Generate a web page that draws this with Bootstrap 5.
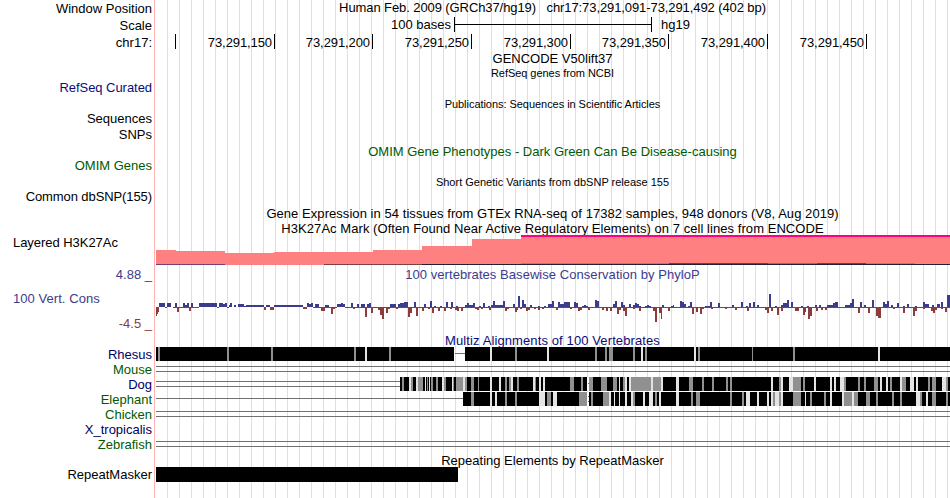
<!DOCTYPE html>
<html lang="en">
<head>
<meta charset="utf-8">
<title>Genome tracks chr17:73,291,091-73,291,492</title>
<link href="https://cdn.jsdelivr.net/npm/bootstrap@5.3.0/dist/css/bootstrap.min.css" rel="stylesheet">
<style>
body{font-family:"Liberation Sans",Arial,sans-serif;font-size:13px;color:#000;background:#fff;overflow:hidden}
.browser{width:950px;height:498px;background:linear-gradient(90deg,transparent 154px,#ffb4b4 154px,#ffb4b4 155px,transparent 155px),repeating-linear-gradient(90deg,#dcdcf8 0 1px,transparent 1px 12px) 167px 0/783px 100% no-repeat}
.trk{height:var(--h);line-height:var(--h);white-space:pre}
.lab{width:156px;padding-right:4px;text-align:right;flex:none}
.lab-start{text-align:left;padding-left:13px}
.ttl{width:794px;text-align:center;flex:none;padding-right:1px}
.tiny{font-size:11px}
.dn{padding-top:1px}
.ls-wide{letter-spacing:.055px}.ls-wider{letter-spacing:.11px}.ls-tight{letter-spacing:-.09px}.ls-snug{letter-spacing:-.045px}
.h13{--h:13px}.h14{--h:14px}.h15{--h:15px}.h16{--h:16px}.h17{--h:17px}.h18{--h:18px}.h19{--h:19px}.h12{--h:12px}.h20{--h:20px}.h29{--h:29px}.h30{--h:30px}
.navy{color:#0c0c78}.dkblue{color:#000060}.grn{color:#005a00}.cons{color:#3c3c8c}.neg{color:#8c3c3c}
svg{display:block;flex:none;overflow:visible;font-size:13px}
</style>
<script src="https://cdn.jsdelivr.net/npm/bootstrap@5.3.0/dist/js/bootstrap.bundle.min.js"></script>
</head>
<body>
<main class="browser d-flex flex-column">
<div class="trk h16 d-flex"><div class="lab dn">Window Position</div><div class="ttl ls-tight">Human Feb. 2009 (GRCh37/hg19)   chr17:73,291,091-73,291,492 (402 bp)</div></div>
<div class="trk h17 d-flex"><div class="lab dn">Scale</div><svg width="794" height="17" viewBox="156 16 794 17"><path d="M454 17h1v7h196v-7h1v15h-1v-7H455v7h-1z"/><text x="451" y="29" text-anchor="end">100 bases</text><text x="661" y="29">hg19</text></svg></div>
<div class="trk h17 d-flex"><div class="lab dn">chr17:</div><svg id="ruler" class="ls-tight" width="794" height="17" viewBox="156 33 794 17"></svg></div>
<div class="trk h16 d-flex"><div class="lab"></div><div class="ttl dn">GENCODE V50lift37</div></div>
<div class="trk h15 d-flex"><div class="lab"></div><div class="ttl tiny ls-snug">RefSeq genes from NCBI</div></div>
<div class="trk h14 d-flex"><div class="lab navy ls-snug">RefSeq Curated</div></div>
<div class="trk h17 d-flex"><div class="lab"></div><div class="ttl tiny dn ls-snug">Publications: Sequences in Scientific Articles</div></div>
<div class="trk h14 d-flex"><div class="lab">Sequences</div></div>
<div class="trk h16 d-flex"><div class="lab dn">SNPs</div></div>
<div class="trk h18 d-flex"><div class="lab"></div><div class="ttl grn dn">OMIM Gene Phenotypes - Dark Green Can Be Disease-causing</div></div>
<div class="trk h12 d-flex"><div class="lab grn">OMIM Genes</div></div>
<div class="trk h18 d-flex"><div class="lab"></div><div class="ttl tiny dn">Short Genetic Variants from dbSNP release 155</div></div>
<div class="trk h14 d-flex"><div class="lab ls-tight">Common dbSNP(155)</div></div>
<div class="trk h18 d-flex"><div class="lab"></div><div class="ttl ls-wide dn">Gene Expression in 54 tissues from GTEx RNA-seq of 17382 samples, 948 donors (V8, Aug 2019)</div></div>
<div class="trk h13 d-flex"><div class="lab"></div><div class="ttl ls-wide">H3K27Ac Mark (Often Found Near Active Regulatory Elements) on 7 cell lines from ENCODE</div></div>
<div class="trk h30 d-flex"><div class="lab lab-start trk h15 ls-snug">Layered H3K27Ac</div>
<svg width="794" height="30" viewBox="156 235 794 30" shape-rendering="crispEdges"><path fill="#ff8080" d="M156 265v-15h20v1h49v2h49v-1h99v-2h49v-4h50v-7h49v-3h429v29z"/><path fill="#ff007f" d="M521 235h429v2H521z"/><path fill="#7d3c78" d="M156 264h69v1h-69z"/><path fill="#804040" d="M324 264h98v1h-98z"/><path fill="#202030" d="M422 264h528v1H422z"/><path fill="#ff6030" d="M521 263h148v1H521zM866 263h49v1h-49z"/><path fill="#704038" d="M669 263h99v1h-99zM817 263h49v1h-49z"/><path fill="#8868a0" d="M768 263h49v1h-49z"/></svg></div>
<div class="trk h19 d-flex"><div class="lab cons">4.88 _</div><div class="ttl cons ls-wide">100 vertebrates Basewise Conservation by PhyloP</div></div>
<div class="d-flex"><div class="d-flex flex-column"><div class="trk lab lab-start h29 cons ls-wide">100 Vert. Cons</div><div class="trk lab h20 neg dn">-4.5 _</div></div><svg id="phylop" width="794" height="49" viewBox="156 284 794 49" shape-rendering="crispEdges"></svg></div>
<div class="trk h14 d-flex"><div class="lab"></div><div class="ttl navy dn ls-wider">Multiz Alignments of 100 Vertebrates</div></div>
<div class="trk h15 d-flex"><div class="lab dkblue">Rhesus</div><svg id="rhesus" width="794" height="15" viewBox="156 0 794 15" shape-rendering="crispEdges"><path fill="#707070" d="M455 6h10v1h-10z"/><path d="M156 0h298v14H156zM465 0h485v14H465z"/></svg></div>
<div class="trk h15 d-flex"><div class="lab grn">Mouse</div><svg width="794" height="15" viewBox="156 0 794 15"><path fill="#707070" d="M156 4h794v1H156zM156 9h794v1H156z"/></svg></div>
<div class="trk h15 d-flex"><div class="lab dkblue">Dog</div><svg id="dog" width="794" height="15" viewBox="156 0 794 15" shape-rendering="crispEdges"><path fill="#707070" d="M156 4h244v1H156zM156 9h244v1H156z"/><path d="M400 0h550v14H400z"/></svg></div>
<div class="trk h15 d-flex"><div class="lab grn">Elephant</div><svg id="elephant" width="794" height="15" viewBox="156 0 794 15" shape-rendering="crispEdges"><path fill="#707070" d="M156 6h307v1H156z"/><path d="M463 0h487v14H463z"/></svg></div>
<div class="trk h15 d-flex"><div class="lab grn">Chicken</div><svg width="794" height="15" viewBox="156 0 794 15"><path fill="#707070" d="M156 4h794v1H156zM156 9h794v1H156z"/></svg></div>
<div class="trk h15 d-flex"><div class="lab dkblue">X_tropicalis</div></div>
<div class="trk h15 d-flex"><div class="lab grn">Zebrafish</div><svg width="794" height="15" viewBox="156 0 794 15"><path fill="#707070" d="M156 4h794v1H156zM156 9h794v1H156z"/></svg></div>
<div class="trk h15 d-flex"><div class="lab"></div><div class="ttl dn">Repeating Elements by RepeatMasker</div></div>
<div class="trk h15 d-flex"><div class="lab">RepeatMasker</div><svg width="794" height="15" viewBox="156 0 794 15"><path d="M156 0h302v15H156z"/></svg></div>
</main>
<script>
const add=(id,s)=>document.getElementById(id).insertAdjacentHTML('beforeend',s);
// Ruler ticks every 50 bases
[175,274,372,471,570,668,767,866].forEach((x,i)=>add('ruler',`<path d="M${x} 34h1v15h-1z"/>`+(i?`<text x="${x-2}" y="47" text-anchor="end">73,291,${100+50*i}</text>`:'')));
// PhyloP scores: start,end,height
const up="159,165,4 167,171,4 175,177,4 183,185,4 185,187,2 187,189,4 191,193,4 199,217,4 219,223,4 223,225,3 225,227,4 229,230,2 230,232,4 234,236,2 238,244,3 244,246,1 246,264,2 266,270,2 274,303,2 307,309,4 309,311,3 311,313,4 315,319,3 325,329,2 337,341,3 341,343,4 343,345,3 351,353,4 357,359,3 361,365,3 367,369,3 369,371,4 390,396,3 398,400,3 400,404,4 404,408,5 414,416,5 424,426,3 430,432,6 434,436,1 440,442,1 446,448,5 451,453,5 456,458,1 465,467,2 467,469,4 469,473,2 473,475,4 479,481,1 483,485,4 488,490,1 491,493,2 493,495,6 495,503,2 503,505,6 513,515,3 518,520,11 522,524,7 524,526,3 530,532,2 538,540,1 544,546,1 548,550,3 550,552,3 552,554,6 558,560,5 560,564,3 564,570,5 574,576,5 576,578,4 582,584,1 584,586,2 586,588,1 595,597,7 597,599,6 613,615,3 615,617,6 621,623,5 623,625,2 629,631,3 633,635,2 635,637,4 637,639,3 639,641,1 645,647,1 647,649,2 649,651,1 662,664,2 671,673,1 673,674,2 680,682,6 682,684,5 684,686,3 688,690,1 690,692,5 705,710,1 710,712,5 718,720,4 732,734,2 741,743,5 746,748,1 749,751,4 753,755,5 757,759,2 769,771,13 775,777,1 781,783,2 783,787,4 787,789,7 791,793,5 801,803,1 807,809,1 815,817,2 819,821,2 827,833,2 833,835,4 835,838,5 845,850,2 850,852,4 852,854,8 860,862,5 864,866,2 872,874,7 883,885,5 885,887,3 887,889,6 891,893,2 897,899,4 903,905,1 907,909,3 915,917,1 923,925,5 925,929,3 932,934,2 937,940,3 941,943,5 947,950,12";
const down="156,157,9 157,158,7 158,159,5 177,179,5 189,191,4 264,266,3 270,274,3 303,307,2 321,325,4 331,333,7 333,335,2 353,355,2 365,367,10 371,373,6 378,380,3 380,382,8 382,384,12 386,388,6 388,390,2 396,398,2 408,410,10 410,412,6 416,418,9 422,424,4 428,430,2 432,434,6 438,440,4 444,446,4 450,452,2 455,457,3 457,459,4 461,463,4 475,477,2 477,479,3 481,483,2 489,491,3 505,507,4 507,509,2 515,517,5 517,518,3 520,522,2 526,528,4 528,530,3 534,536,2 538,540,3 542,544,2 556,558,3 570,572,2 578,580,4 580,582,3 588,590,3 602,604,3 606,608,4 610,612,4 617,619,7 619,621,3 623,625,4 625,627,9 633,635,2 639,641,4 653,655,4 655,657,15 659,661,6 661,662,12 668,670,4 692,694,7 696,698,5 700,702,7 702,704,2 711,713,2 725,727,2 735,737,3 747,749,4 765,767,3 767,769,6 771,773,4 777,779,8 781,783,4 795,799,4 803,805,8 805,806,5 808,810,12 810,812,9 816,818,4 821,823,3 825,827,3 858,860,6 868,870,6 876,878,9 878,881,11 893,895,2 903,905,6 913,915,9 915,917,4 923,925,2 931,933,4 933,935,6 935,937,3 941,943,2 945,947,5";
const bars=(s,f)=>s.split(' ').map(t=>f(...t.split(',').map(Number))).join('');
add('phylop','<path fill="#8c3c3c" d="M165 307h2v1h-2zM173 307h26v1h-26zM217 307h2v1h-2zM227 307h2v1h-2zM313 307h24v1h-24zM345 307h605v1H345z"/>');
add('phylop',`<path fill="#3c3c8c" d="${bars(up,(a,b,h)=>`M${a} ${307-h}H${b}V307H${a}z`)}"/><path fill="#8c3c3c" d="${bars(down,(a,b,h)=>`M${a} 307H${b}v${h}H${a}z`)}"/>`);
// Alignment tiles: g = mid gray, l = light gap, w = break; third-pixel offsets from an origin
const col={g:'#909090',l:'#e4e4e4',w:'#ffffff'};
function tiles(id,x0,s){add(id,s.split(' ').map(t=>{const [a,b]=t.slice(1).split('-').map(Number);return `<path fill="${col[t[0]]}" d="M${x0+a/3} 0H${x0+b/3}v14H${x0+a/3}z"/>`}).join(''))}
tiles('rhesus',150,'g24-30 g231-237 g363-369 g612-618 l645-651 g717-723');
tiles('rhesus',390,'l300-306 g375-381 l471-477 g615-621 g645-651 g657-669 g729-735 l753-759 g765-771');
tiles('rhesus',670,'l72-78 g84-90 g246-249 g369-375 l624-630');
tiles('dog',390,'g36-42 l57-63 g63-69 l78-84 g84-99 l105-108 g111-114 l117-120 g123-129 g138-144 l156-162 g162-168 l186-189 g189-192 g198-219 l219-225 g225-231 g243-252 g264-267 l300-306 l327-333 g345-351 g357-363 l363-369 g381-387 l429-435 g435-438 l447-453 l459-465 g540-552 g573-579 w591-597 g597-609 g633-651 g669-681 l687-690 g699-705 l705-711 l717-723 g723-783 l783-789 g789-813 l813-819');
tiles('dog',670,'l18-27 g57-69 g96-102 g126-132 g168-174 g180-186 l303-309 g327-333 l333-339 l357-369 g369-393 g399-405 l432-438 l480-486 l492-498 l510-522 g522-528 g564-570 g582-588 g612-624 l630-636 l648-654 g660-666 l690-696 g696-708 l720-732 l738-744 g774-780 g786-798 l816-828 g828-834');
tiles('elephant',390,'g243-252 l300-306 l315-321 g345-351 g375-381 l447-465 g471-483 l489-501 g567-591 w591-597 g603-609 g639-657 l657-663 l672-675 l687-690 l705-711 l723-729 g729-735 l759-765 l777-789 g795-801 l807-813');
tiles('elephant',670,'l18-27 g63-69 g78-90 g180-186 g216-222 l228-240 l261-267 l291-297 l303-309 g309-315 l315-327 g327-333 l333-339 g369-393 l405-408 g420-426 g462-468 l480-486 l516-522 g522-546 l546-552 g552-564 g588-600 g618-624 g666-672 g690-696 l738-750 g750-756 l768-774 g786-798 g828-834');
add('dog','<path fill="#707070" d="M588 6h1v1h-1z"/>');
add('elephant','<path fill="#707070" d="M588 4h1v1h-1zM588 9h1v1h-1z"/>');
</script>
</body>
</html>
